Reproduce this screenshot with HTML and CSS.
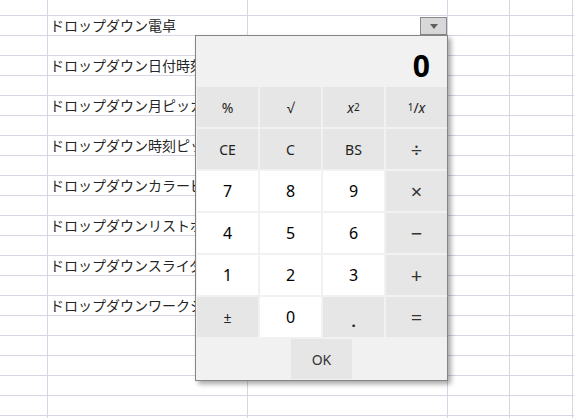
FILE: index.html
```html
<!DOCTYPE html>
<html lang="ja">
<head>
<meta charset="utf-8">
<title>ドロップダウン電卓</title>
<link rel="stylesheet" href="styles.css">
</head>
<body>
<div class="sheet">
  <div class="row first"><div class="c a"></div><div class="c b"></div><div class="c cc"></div><div class="c d"></div><div class="c e"></div><div class="c f"></div></div>
  <div class="row"><div class="c a"></div><div class="c b"><span class="label">ドロップダウン電卓</span></div><div class="c cc drop"><span class="dd-btn"><span class="tri"></span></span></div><div class="c d"></div><div class="c e"></div><div class="c f"></div></div>
  <div class="row"><div class="c a"></div><div class="c b"></div><div class="c cc"></div><div class="c d"></div><div class="c e"></div><div class="c f"></div></div>
  <div class="row"><div class="c a"></div><div class="c b"><span class="label clip">ドロップダウン日付時刻</span></div><div class="c cc"></div><div class="c d"></div><div class="c e"></div><div class="c f"></div></div>
  <div class="row"><div class="c a"></div><div class="c b"></div><div class="c cc"></div><div class="c d"></div><div class="c e"></div><div class="c f"></div></div>
  <div class="row"><div class="c a"></div><div class="c b"><span class="label clip">ドロップダウン月ピッカー</span></div><div class="c cc"></div><div class="c d"></div><div class="c e"></div><div class="c f"></div></div>
  <div class="row"><div class="c a"></div><div class="c b"></div><div class="c cc"></div><div class="c d"></div><div class="c e"></div><div class="c f"></div></div>
  <div class="row"><div class="c a"></div><div class="c b"><span class="label clip">ドロップダウン時刻ピッカー</span></div><div class="c cc"></div><div class="c d"></div><div class="c e"></div><div class="c f"></div></div>
  <div class="row"><div class="c a"></div><div class="c b"></div><div class="c cc"></div><div class="c d"></div><div class="c e"></div><div class="c f"></div></div>
  <div class="row"><div class="c a"></div><div class="c b"><span class="label clip">ドロップダウンカラーピッカー</span></div><div class="c cc"></div><div class="c d"></div><div class="c e"></div><div class="c f"></div></div>
  <div class="row"><div class="c a"></div><div class="c b"></div><div class="c cc"></div><div class="c d"></div><div class="c e"></div><div class="c f"></div></div>
  <div class="row"><div class="c a"></div><div class="c b"><span class="label clip">ドロップダウンリストボックス</span></div><div class="c cc"></div><div class="c d"></div><div class="c e"></div><div class="c f"></div></div>
  <div class="row"><div class="c a"></div><div class="c b"></div><div class="c cc"></div><div class="c d"></div><div class="c e"></div><div class="c f"></div></div>
  <div class="row"><div class="c a"></div><div class="c b"><span class="label clip">ドロップダウンスライダー</span></div><div class="c cc"></div><div class="c d"></div><div class="c e"></div><div class="c f"></div></div>
  <div class="row"><div class="c a"></div><div class="c b"></div><div class="c cc"></div><div class="c d"></div><div class="c e"></div><div class="c f"></div></div>
  <div class="row"><div class="c a"></div><div class="c b"><span class="label clip">ドロップダウンワークシート</span></div><div class="c cc"></div><div class="c d"></div><div class="c e"></div><div class="c f"></div></div>
  <div class="row"><div class="c a"></div><div class="c b"></div><div class="c cc"></div><div class="c d"></div><div class="c e"></div><div class="c f"></div></div>
  <div class="row"><div class="c a"></div><div class="c b"></div><div class="c cc"></div><div class="c d"></div><div class="c e"></div><div class="c f"></div></div>
  <div class="row"><div class="c a"></div><div class="c b"></div><div class="c cc"></div><div class="c d"></div><div class="c e"></div><div class="c f"></div></div>
  <div class="row"><div class="c a"></div><div class="c b"></div><div class="c cc"></div><div class="c d"></div><div class="c e"></div><div class="c f"></div></div>
  <div class="row"><div class="c a"></div><div class="c b"></div><div class="c cc"></div><div class="c d"></div><div class="c e"></div><div class="c f"></div></div>
  <div class="row"><div class="c a"></div><div class="c b"></div><div class="c cc"></div><div class="c d"></div><div class="c e"></div><div class="c f"></div></div>
</div>

<div class="calc">
  <div class="display">0</div>
  <div class="keys">
    <div class="key fn">%</div>
    <div class="key fn">√</div>
    <div class="key fn"><span class="it">x</span><sup>2</sup></div>
    <div class="key fn"><sup>1</sup>/<sub class="it">x</sub></div>
    <div class="key fn">CE</div>
    <div class="key fn">C</div>
    <div class="key fn">BS</div>
    <div class="key fn op">÷</div>
    <div class="key num">7</div>
    <div class="key num">8</div>
    <div class="key num">9</div>
    <div class="key fn op">×</div>
    <div class="key num">4</div>
    <div class="key num">5</div>
    <div class="key num">6</div>
    <div class="key fn op">−</div>
    <div class="key num">1</div>
    <div class="key num">2</div>
    <div class="key num">3</div>
    <div class="key fn op">+</div>
    <div class="key fn">±</div>
    <div class="key num">0</div>
    <div class="key fn dot">.</div>
    <div class="key fn op">=</div>
  </div>
  <div class="ok-bar"><div class="ok">OK</div></div>
</div>
</body>
</html>
```

FILE: styles.css
```css
html, body {
  margin: 0;
  padding: 0;
  background: #ffffff;
  overflow: hidden;
}

body {
  width: 574px;
  height: 418px;
  position: relative;
  font-family: "Noto Sans CJK JP", "Noto Sans", sans-serif;
}

.sheet {
  display: flex;
  flex-direction: column;
}

.row {
  display: grid;
  grid-template-columns: 48px 200px 200px 62px 63px 1fr;
  height: 20px;
}

.row.first {
  height: 16px;
}

.c {
  box-sizing: border-box;
  border-right: 1px solid #d5d5e3;
  border-bottom: 1px solid #d5d5e3;
  overflow: hidden;
  white-space: nowrap;
  font-size: 14px;
  line-height: 19px;
  color: #262626;
  padding-left: 2px;
}

.label {
  display: block;
  overflow: hidden;
  white-space: nowrap;
}

.label.clip {
  width: 145px;
}

.c.drop {
  display: flex;
  justify-content: flex-end;
  align-items: flex-start;
  padding: 1px 0 0 0;
}

.dd-btn {
  box-sizing: border-box;
  width: 27px;
  height: 18px;
  background: #d8d8d8;
  border: 1px solid #8a8a8a;
  display: flex;
  align-items: center;
  justify-content: center;
}

.tri {
  width: 0;
  height: 0;
  border-left: 4px solid transparent;
  border-right: 4px solid transparent;
  border-top: 5px solid #606060;
}

.calc {
  position: absolute;
  left: 195px;
  top: 35px;
  width: 253px;
  height: 346px;
  box-sizing: border-box;
  border: 1px solid #858585;
  background: #f1f1f1;
  box-shadow: 3px 3px 5px rgba(0, 0, 0, 0.35);
  display: flex;
  flex-direction: column;
  font-family: "Noto Sans", "Open Sans", sans-serif;
}

.display {
  height: 51px;
  box-sizing: border-box;
  display: flex;
  align-items: center;
  justify-content: flex-end;
  padding: 8px 17px 0 0;
  font-size: 30px;
  font-weight: 700;
  color: #000;
}

.keys {
  display: grid;
  grid-template-columns: repeat(4, 61px);
  grid-auto-rows: 40px;
  gap: 2px;
  padding: 0 0 0 1px;
}

.key {
  display: flex;
  align-items: center;
  justify-content: center;
  font-size: 14px;
  color: #222;
}

.key.fn {
  background: #e6e6e6;
}

.key.num {
  background: #ffffff;
  font-size: 16px;
  color: #000;
}

.key.op {
  font-size: 20px;
  color: #333;
}

.key.dot {
  font-size: 15px;
  font-weight: 700;
  align-items: flex-end;
  padding-bottom: 6px;
  box-sizing: border-box;
}

.it {
  font-style: italic;
}

.key sup {
  font-size: 10px;
  vertical-align: 6px;
}

.key sub {
  font-size: 14px;
  vertical-align: -3px;
}

.ok-bar {
  flex: 1;
  display: flex;
  justify-content: center;
  align-items: stretch;
  padding: 2px 0 1px 0;
}

.ok {
  width: 61px;
  background: #e6e6e6;
  display: flex;
  align-items: center;
  justify-content: center;
  font-size: 14px;
  color: #333;
}
```
